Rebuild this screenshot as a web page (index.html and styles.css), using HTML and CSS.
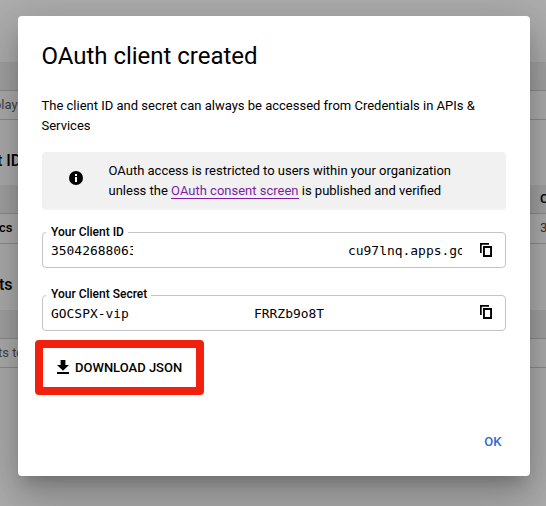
FILE: index.html
```html
<!DOCTYPE html>
<html lang="en">
<head>
<meta charset="utf-8">
<title>OAuth client created</title>
<link rel="stylesheet" href="styles.css">
</head>
<body>
<main class="page">
  <section class="block first">
    <div class="thead"></div>
    <div class="row"><span class="muted c-play">play</span></div>
  </section>
  <section class="block">
    <h2 class="h-id">t ID</h2>
    <div class="thead"><b>C</b></div>
    <div class="row tall"><span class="c-cs">cs</span><span class="num">3</span></div>
  </section>
  <section class="block">
    <h2 class="h-ts">ts</h2>
    <div class="thead"></div>
    <div class="row"><span class="muted c-to">ts to</span></div>
  </section>
</main>
<div class="backdrop">
  <div class="dialog" role="dialog">
    <h1>OAuth client created</h1>
    <p class="intro">The client ID and secret can always be accessed from Credentials in APIs &amp;<br>Services</p>
    <div class="notice">
      <svg class="info" viewBox="0 0 14 14"><circle cx="7" cy="7" r="7"/><path fill="#fff" d="M6 3h2v2H6zM6 6h2v5H6z"/></svg>
      <p>OAuth access is restricted to users within your organization<br>unless the <a>OAuth consent screen</a> is published and verified</p>
    </div>
    <fieldset class="field">
      <legend>Your Client ID</legend>
      <div class="value"><span class="id-start">35042688063</span><span class="id-end">cu97lnq.apps.go</span>
        <svg class="copy" viewBox="0 0 12 14"><path d="M0 10V0h9v1.7H1.7V10z"/><path fill-rule="evenodd" d="M3 3h9v11H3zM4.9 4.9v7.2h5.2V4.9z"/></svg>
      </div>
    </fieldset>
    <fieldset class="field second">
      <legend>Your Client Secret</legend>
      <div class="value"><span class="sec-start">GOCSPX-vip</span><span class="sec-end">FRRZb9o8T</span>
        <svg class="copy raised" viewBox="0 0 12 14"><path d="M0 10V0h9v1.7H1.7V10z"/><path fill-rule="evenodd" d="M3 3h9v11H3zM4.9 4.9v7.2h5.2V4.9z"/></svg>
      </div>
    </fieldset>
    <div class="download">
      <svg viewBox="0 0 12 14"><path d="M3.6 0h4.8v5H12L6 10.7 0 5h3.6zM0 12h12v2H0z"/></svg>
      <span>DOWNLOAD JSON</span>
    </div>
    <div class="actions"><span>OK</span></div>
  </div>
</div>
</body>
</html>
```
FILE: styles.css
```css
* { box-sizing: border-box; }
body, h1, h2, p { margin: 0; }
body {
  width: 546px; height: 506px; overflow: hidden; position: relative;
  font-family: Roboto, sans-serif; font-size: 13px; color: #000; background: #fff;
}
.page { height: 506px; }
.first { padding-top: 62px; }
.thead { height: 29px; background: #efefef; border-bottom: 1px solid #cfcfcf; display: flex; justify-content: flex-end; line-height: 28px; overflow: hidden; }
.thead b { width: 6px; font-weight: 500; }
.row { height: 29px; border-bottom: 1px solid #cfcfcf; line-height: 28px; display: flex; justify-content: space-between; white-space: nowrap; }
.row.tall { height: 30px; }
.muted { color: #5f6368; }
.c-play { margin-left: -6px; }
.c-to { margin-left: -2px; }
.c-cs { margin-left: -1px; font-weight: 500; }
.num { width: 6px; color: #5a4a48; }
h2 { font-size: 16px; font-weight: 500; line-height: 24px; white-space: nowrap; }
.h-id { height: 65px; padding-top: 29px; margin-left: -3px; }
.h-ts { height: 66px; padding-top: 29px; margin-left: -1px; }

.backdrop { position: absolute; inset: 0; background: rgba(0,0,0,.32); padding: 16px 16px 30px 18px; }
.dialog {
  width: 512px; height: 460px; background: #fff; border-radius: 4px; padding: 24px 24px 0;
  box-shadow: 0 11px 15px -7px rgba(0,0,0,.2), 0 24px 38px 3px rgba(0,0,0,.14), 0 9px 46px 8px rgba(0,0,0,.12);
}
h1 { font-size: 24px; font-weight: 400; line-height: 32px; height: 56px; margin-left: -.5px; letter-spacing: -.02px; white-space: nowrap; }
.intro { line-height: 20px; height: 56px; margin-left: -.5px; white-space: nowrap; }
.notice { height: 58px; border-radius: 4px; background: #f1f1f1; display: flex; align-items: center; line-height: 20px; white-space: nowrap; }
.notice p { margin-left: 25.5px; }
.info { width: 14px; height: 14px; margin-left: 27px; margin-top: -6px; }
.notice a { color: #7b1fa2; border-bottom: 1px solid #7b1fa2; }
.field { margin: 15px 0 0; height: 43px; min-width: 0; border: 1px solid #c4c4c4; border-radius: 4px; padding: 0 13px 0 8px; }
.field.second { margin-top: 20px; }
legend { padding: 0 4px 0 5px; margin-left: -5px; font-size: 12px; line-height: 14px; height: 14px; font-weight: 500; }
.second legend { line-height: 12px; }
.value { height: 24px; display: flex; align-items: center; font: 12.95px/20px "DejaVu Sans Mono", monospace; white-space: nowrap; }
.value span { overflow: hidden; flex: none; }
.id-start { width: 82px; }
.id-end { width: 114px; margin-left: 215px; }
.sec-start { width: 79px; }
.sec-end { margin-left: 124px; }
.copy { width: 12px; height: 14px; margin: -2px 0 0 auto; flex: none; }
.copy.raised { margin-top: -4px; }
.download {
  width: 169px; height: 55px; margin: 9px 0 0 -7px; border: 8px solid #f2200d; border-radius: 4px;
  display: flex; align-items: center; padding-left: 14px; gap: 6px; font-weight: 500; white-space: nowrap;
}
.download svg { width: 12px; height: 14px; margin-top: -2px; }
.actions { display: flex; justify-content: flex-end; padding: 37px 4.5px 0 0; line-height: 20px; font-weight: 500; color: #3367d6; }
```
